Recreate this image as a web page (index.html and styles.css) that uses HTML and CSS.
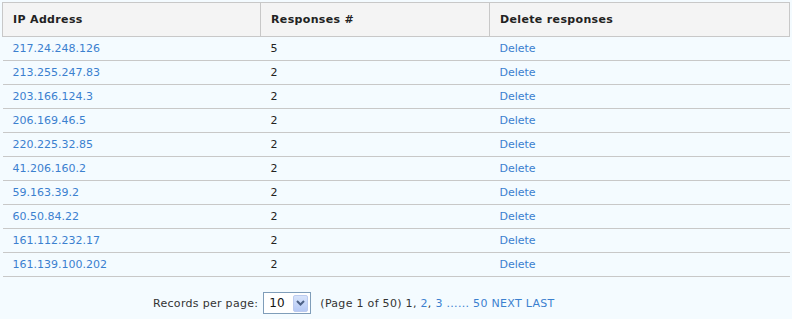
FILE: index.html
```html
<!DOCTYPE html>
<html>
<head>
<meta charset="utf-8">
<link rel="stylesheet" href="styles.css">
</head>
<body>
<div class="page">
  <table class="grid">
    <colgroup>
      <col class="c1"><col class="c2"><col class="c3">
    </colgroup>
    <thead>
      <tr><th>IP Address</th><th>Responses #</th><th>Delete responses</th></tr>
    </thead>
    <tbody>
      <tr><td><a href="#">217.24.248.126</a></td><td>5</td><td><a href="#">Delete</a></td></tr>
      <tr><td><a href="#">213.255.247.83</a></td><td>2</td><td><a href="#">Delete</a></td></tr>
      <tr><td><a href="#">203.166.124.3</a></td><td>2</td><td><a href="#">Delete</a></td></tr>
      <tr><td><a href="#">206.169.46.5</a></td><td>2</td><td><a href="#">Delete</a></td></tr>
      <tr><td><a href="#">220.225.32.85</a></td><td>2</td><td><a href="#">Delete</a></td></tr>
      <tr><td><a href="#">41.206.160.2</a></td><td>2</td><td><a href="#">Delete</a></td></tr>
      <tr><td><a href="#">59.163.39.2</a></td><td>2</td><td><a href="#">Delete</a></td></tr>
      <tr><td><a href="#">60.50.84.22</a></td><td>2</td><td><a href="#">Delete</a></td></tr>
      <tr><td><a href="#">161.112.232.17</a></td><td>2</td><td><a href="#">Delete</a></td></tr>
      <tr><td><a href="#">161.139.100.202</a></td><td>2</td><td><a href="#">Delete</a></td></tr>
    </tbody>
  </table>
  <div class="pager">
    <span class="label">Records per page:</span>
    <div class="select">
      <span class="val">10</span>
      <span class="btn"><svg width="9" height="6" viewBox="0 0 9 6"><path d="M1 1 L4.5 4.5 L8 1" fill="none" stroke="#4d6185" stroke-width="2"/></svg></span>
    </div>
    <span class="info">(Page 1 of 50) 1, <a href="#">2</a>, <a href="#">3</a> <a href="#">......</a> <a href="#">50</a> <a href="#">NEXT</a> <a href="#">LAST</a></span>
  </div>
</div>
</body>
</html>
```
FILE: styles.css
```css
html, body {
  margin: 0;
  padding: 0;
  background: #f4fbff;
}
.page {
  padding: 2px 3px 0 2px;
  font-family: "DejaVu Sans", Verdana, sans-serif;
  font-size: 11px;
  color: #222;
}
a {
  color: #3b80cf;
  text-decoration: none;
}
.grid {
  width: 787px;
  border-collapse: collapse;
  table-layout: fixed;
}
.c1 { width: 258px; }
.c2 { width: 229px; }
.c3 { width: 300px; }
.grid th {
  background: #f4f4f4;
  border: 1px solid #c8c8c8;
  height: 33px;
  padding: 0 0 0 10px;
  text-align: left;
  font-weight: bold;
  color: #222;
  letter-spacing: 0.35px;
  vertical-align: middle;
}
.grid td {
  height: 23px;
  padding: 0 0 0 10px;
  border-bottom: 1px solid #c8c8c8;
  vertical-align: middle;
}
.pager {
  display: flex;
  align-items: center;
  margin-left: 151px;
  margin-top: 15px;
  color: #333;
  letter-spacing: 0.3px;
}
.label {
  margin-right: 5px;
}
.select {
  display: flex;
  align-items: center;
  justify-content: space-between;
  box-sizing: border-box;
  width: 48px;
  height: 22px;
  border: 1px solid #7f9db9;
  background: #fff;
  padding: 1px 2px 1px 5px;
  color: #111;
  font-size: 12px;
  letter-spacing: 0;
}
.btn {
  display: flex;
  align-items: center;
  justify-content: center;
  width: 15px;
  height: 17px;
  border-radius: 2px;
  background: linear-gradient(#d8e4fb, #b6c9f5);
  border: 1px solid #bccbef;
  box-sizing: border-box;
}
.info {
  margin-left: 9px;
}
```
